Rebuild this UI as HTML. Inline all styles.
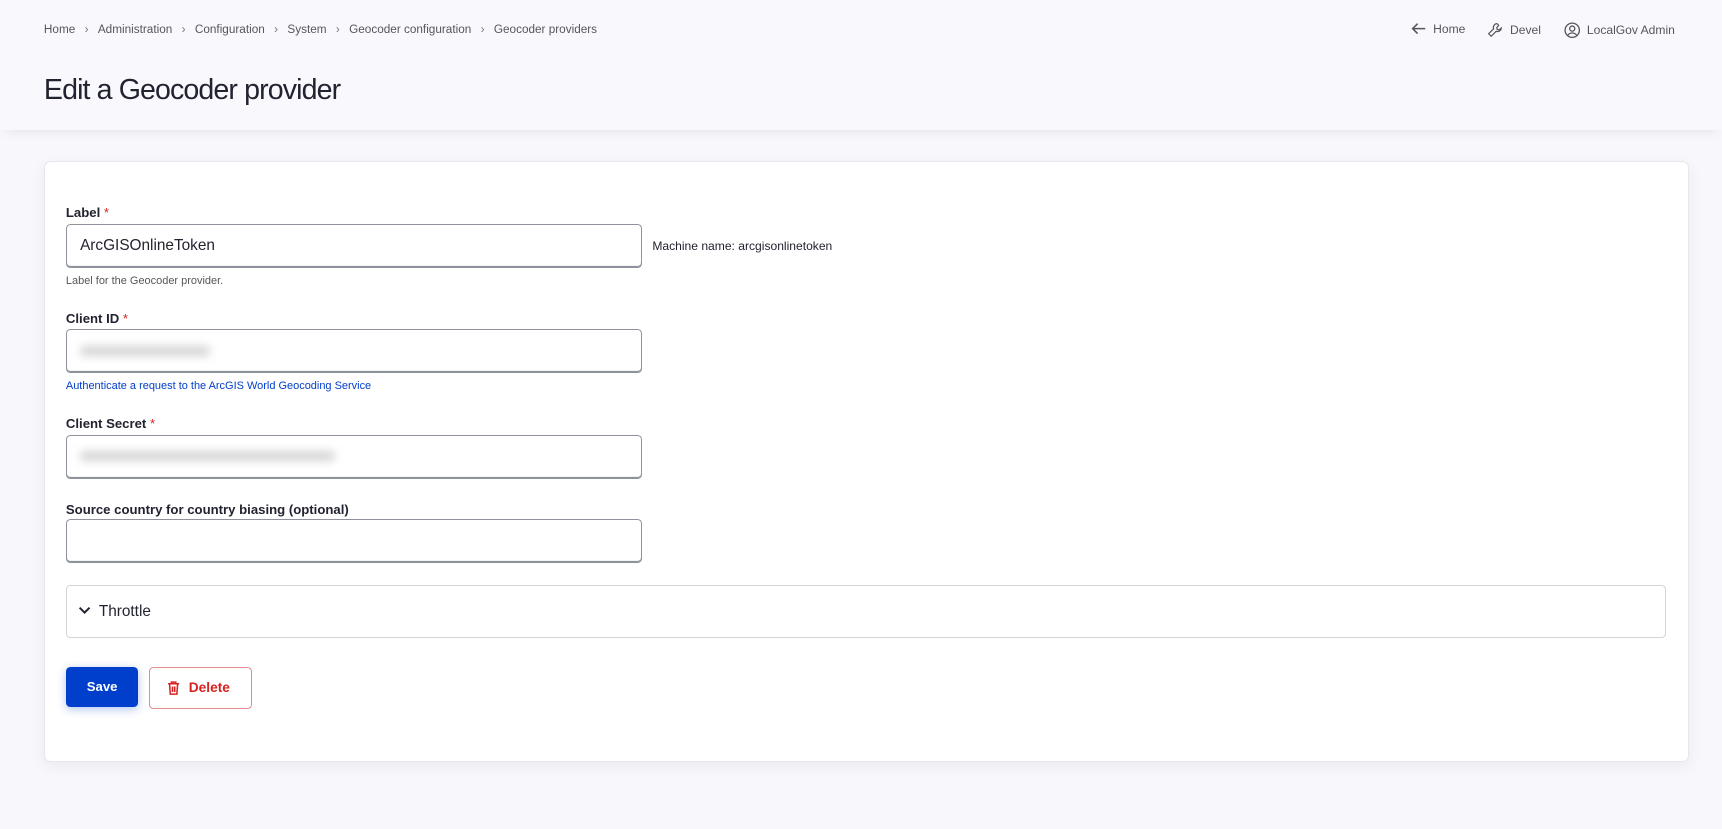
<!DOCTYPE html>
<html><head><meta charset="utf-8">
<style>
html,body{margin:0;padding:0;}
body{width:1568px;height:755px;zoom:1.09821;background:#f8f8fc;font-family:"Liberation Sans",sans-serif;color:#232429;position:relative;overflow:hidden;}
.hdr{position:absolute;left:0;top:0;width:1568px;height:118px;background:#f9f9fd;box-shadow:0 6px 10px -4px rgba(0,0,0,0.08);}
.bc{position:absolute;left:40px;top:21px;font-size:10.7px;color:#55565b;white-space:nowrap;}
.bc span.s{margin:0 8.5px;color:#777;}
.tr{position:absolute;top:20px;font-size:11px;color:#55565b;display:flex;align-items:center;gap:6px;}
h1{position:absolute;left:40px;top:67px;margin:0;font-size:26px;font-weight:normal;color:#222330;letter-spacing:-0.8px;}
.card{position:absolute;left:40px;top:147px;width:1496px;height:545px;background:#fff;border:1px solid #e6e6ec;border-radius:6px;box-shadow:0 4px 14px rgba(0,0,0,0.06);}
.lbl{position:absolute;left:60px;font-size:12px;font-weight:bold;color:#222330;}
.lbl b{color:#d72222;font-weight:normal;}
.inp{position:absolute;left:60px;width:523px;height:38px;border:1px solid #8e929c;border-radius:4px;background:#fff;box-shadow:inset 0 -1px 0 #8e929c;}
.desc{position:absolute;left:60px;font-size:10px;color:#55565b;}
.blur{position:absolute;top:14px;left:12px;height:9px;background:#aaa;filter:blur(4px);opacity:.5;border-radius:4px;}
</style></head><body>
<div class="hdr"></div>
<div class="bc">Home<span class="s">›</span>Administration<span class="s">›</span>Configuration<span class="s">›</span>System<span class="s">›</span>Geocoder configuration<span class="s">›</span>Geocoder providers</div>
<div class="tr" style="left:1285px"><svg width="14" height="12" viewBox="0 0 14 12"><path d="M13 6H2M6 1.5L1.5 6 6 10.5" stroke="#55565b" stroke-width="1.4" fill="none"/></svg><span>Home</span></div>
<div class="tr" style="left:1354px"><svg width="15" height="15" viewBox="0 0 15 15"><path d="M9 1.5a3.5 3.5 0 0 0-3 4.7L1.5 10.7l2.3 2.3L8.3 8.5A3.5 3.5 0 0 0 13 5.5L11 7.2 9.3 6.8 8.9 5.1 10.6 3.2A3.5 3.5 0 0 0 9 1.5z" stroke="#55565b" stroke-width="1.1" fill="none"/></svg><span>Devel</span></div>
<div class="tr" style="left:1424px"><svg width="15" height="15" viewBox="0 0 15 15"><circle cx="7.5" cy="7.5" r="6.5" stroke="#55565b" stroke-width="1.2" fill="none"/><circle cx="7.5" cy="6" r="2.3" stroke="#55565b" stroke-width="1.2" fill="none"/><path d="M3.3 12.3c1-1.6 2.4-2.3 4.2-2.3s3.2.7 4.2 2.3" stroke="#55565b" stroke-width="1.2" fill="none"/></svg><span>LocalGov Admin</span></div>
<h1>Edit a Geocoder provider</h1>
<div class="card"></div>
<div class="lbl" style="top:187px">Label <b>*</b></div>
<div class="inp" style="top:204px"><span style="position:absolute;left:12px;top:11px;font-size:14px;color:#222330">ArcGISOnlineToken</span></div>
<div style="position:absolute;left:594px;top:218px;font-size:11px;color:#222330">Machine name: arcgisonlinetoken</div>
<div class="desc" style="top:250px">Label for the Geocoder provider.</div>
<div class="lbl" style="top:283px">Client ID <b>*</b></div>
<div class="inp" style="top:300px"><div class="blur" style="width:118px"></div></div>
<div class="desc" style="top:346px;color:#003ecc">Authenticate a request to the ArcGIS World Geocoding Service</div>
<div class="lbl" style="top:379px">Client Secret <b>*</b></div>
<div class="inp" style="top:396px"><div class="blur" style="width:232px"></div></div>
<div class="lbl" style="top:457px">Source country for country biasing (optional)</div>
<div class="inp" style="top:473px"></div>
<div style="position:absolute;left:60px;top:533px;width:1455px;height:46px;border:1px solid #d3d4d9;border-radius:4px;background:#fff"></div>
<svg style="position:absolute;left:71px;top:552px" width="12" height="8" viewBox="0 0 12 8"><path d="M1.5 1.5L6 6l4.5-4.5" stroke="#222330" stroke-width="1.8" fill="none"/></svg>
<div style="position:absolute;left:90px;top:549px;font-size:14px;color:#222330">Throttle</div>
<div style="position:absolute;left:60px;top:607px;width:66px;height:37px;background:#003ecc;border-radius:4px;box-shadow:0 2px 8px rgba(0,62,204,0.3);color:#fff;font-weight:bold;font-size:12px;text-align:center;line-height:37px">Save</div>
<div style="position:absolute;left:136px;top:607px;width:92px;height:37px;border:1px solid #e38b8b;border-radius:4px;background:#fff;color:#d72222;font-weight:bold;font-size:12.5px;line-height:37px;box-sizing:content-box">
<svg style="position:absolute;left:15px;top:12px" width="12" height="13" viewBox="0 0 12 13"><path d="M1 2.5h10M4 2.5V1h4v1.5M2.3 2.5l.7 9.5h6l.7-9.5M5 5v5M7 5v5" stroke="#d72222" stroke-width="1.4" fill="none"/></svg>
<span style="position:absolute;left:35px">Delete</span></div>
</body></html>
